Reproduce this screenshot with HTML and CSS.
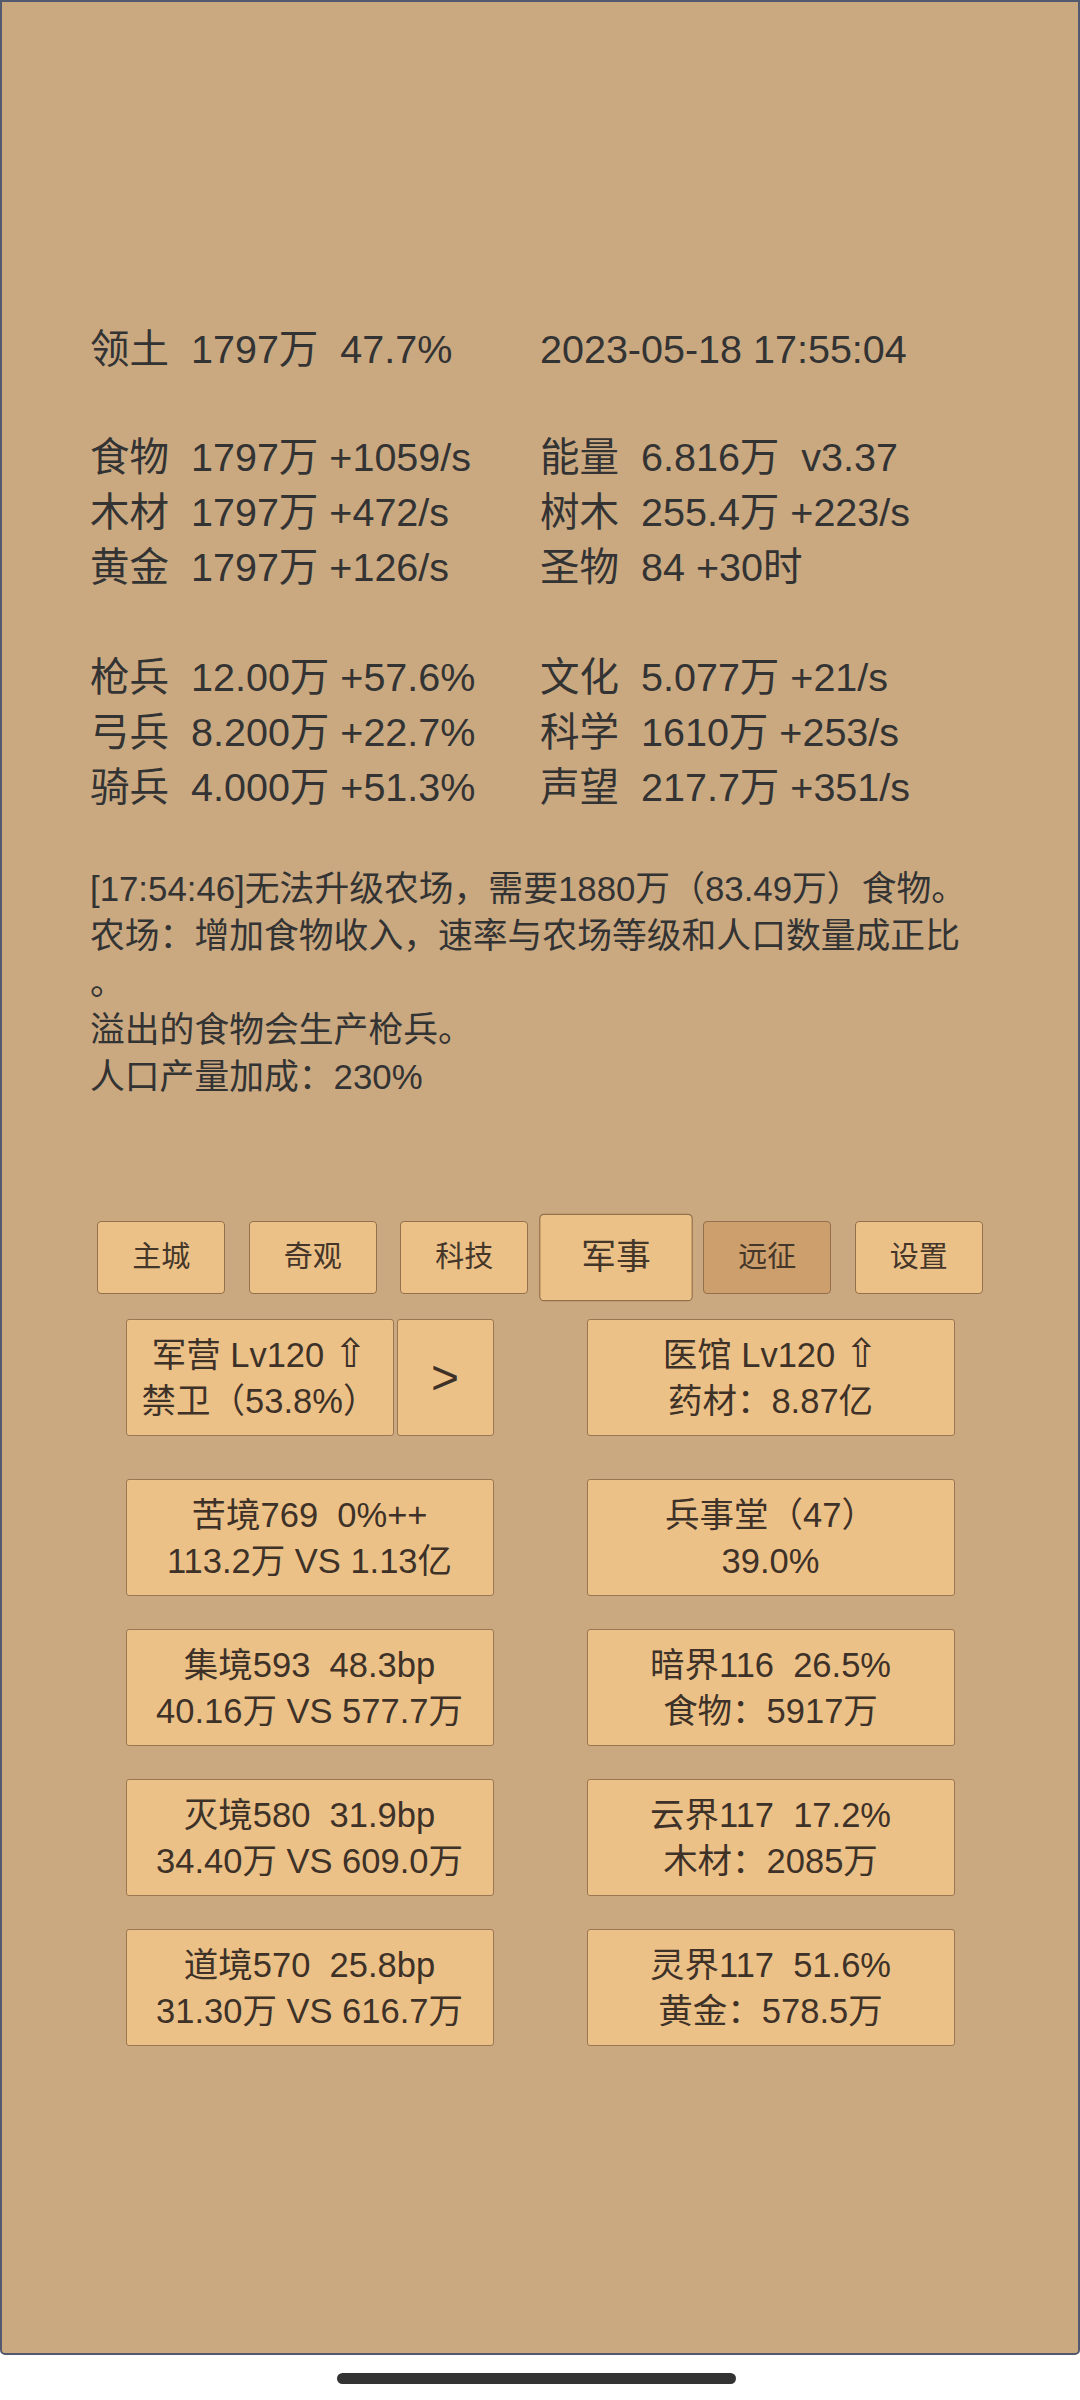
FILE: index.html
```html
<!DOCTYPE html>
<html lang="zh-CN">
<head>
<meta charset="utf-8">
<title>Game</title>
<link rel="stylesheet" href="styles.css">
</head>
<body>
<div class="screen">
  <div class="stats">
    <div class="cell"><span class="lbl">领土</span><span class="val">1797万  47.7%</span></div>
    <div class="cell"><span class="val">2023-05-18 17:55:04</span></div>
  </div>
  <div class="stats group">
    <div class="cell"><span class="lbl">食物</span><span class="val">1797万 +1059/s</span></div>
    <div class="cell"><span class="lbl">能量</span><span class="val">6.816万  v3.37</span></div>
    <div class="cell"><span class="lbl">木材</span><span class="val">1797万 +472/s</span></div>
    <div class="cell"><span class="lbl">树木</span><span class="val">255.4万 +223/s</span></div>
    <div class="cell"><span class="lbl">黄金</span><span class="val">1797万 +126/s</span></div>
    <div class="cell"><span class="lbl">圣物</span><span class="val">84 +30时</span></div>
  </div>
  <div class="stats group2">
    <div class="cell"><span class="lbl">枪兵</span><span class="val">12.00万 +57.6%</span></div>
    <div class="cell"><span class="lbl">文化</span><span class="val">5.077万 +21/s</span></div>
    <div class="cell"><span class="lbl">弓兵</span><span class="val">8.200万 +22.7%</span></div>
    <div class="cell"><span class="lbl">科学</span><span class="val">1610万 +253/s</span></div>
    <div class="cell"><span class="lbl">骑兵</span><span class="val">4.000万 +51.3%</span></div>
    <div class="cell"><span class="lbl">声望</span><span class="val">217.7万 +351/s</span></div>
  </div>

  <div class="log">
    <div class="log-line">[17:54:46]无法升级农场，需要1880万（83.49万）食物。</div>
    <div class="log-line">农场：增加食物收入，速率与农场等级和人口数量成正比</div>
    <div class="log-line">。</div>
    <div class="log-line">溢出的食物会生产枪兵。</div>
    <div class="log-line">人口产量加成：230%</div>
  </div>

  <div class="tabs">
    <div class="tab">主城</div>
    <div class="tab">奇观</div>
    <div class="tab">科技</div>
    <div class="tab active">军事</div>
    <div class="tab dim">远征</div>
    <div class="tab">设置</div>
  </div>

  <div class="cards">
    <div class="card-row first">
      <div class="split">
        <div class="card main"><div>军营 Lv120 <span class="arrow">⇧</span></div><div>禁卫（53.8%）</div></div>
        <div class="card next">&gt;</div>
      </div>
      <div class="card"><div>医馆 Lv120 <span class="arrow">⇧</span></div><div>药材：8.87亿</div></div>
    </div>
    <div class="card-row">
      <div class="card"><div>苦境769  0%++</div><div>113.2万 VS 1.13亿</div></div>
      <div class="card"><div>兵事堂（47）</div><div>39.0%</div></div>
    </div>
    <div class="card-row">
      <div class="card"><div>集境593  48.3bp</div><div>40.16万 VS 577.7万</div></div>
      <div class="card"><div>暗界116  26.5%</div><div>食物：5917万</div></div>
    </div>
    <div class="card-row">
      <div class="card"><div>灭境580  31.9bp</div><div>34.40万 VS 609.0万</div></div>
      <div class="card"><div>云界117  17.2%</div><div>木材：2085万</div></div>
    </div>
    <div class="card-row">
      <div class="card"><div>道境570  25.8bp</div><div>31.30万 VS 616.7万</div></div>
      <div class="card"><div>灵界117  51.6%</div><div>黄金：578.5万</div></div>
    </div>
  </div>
</div>
<div class="home-area">
  <div class="home-bar"></div>
</div>
</body>
</html>
```
FILE: styles.css
```css
html, body {
  margin: 0;
  padding: 0;
  background: #ffffff;
}

body {
  width: 1080px;
  height: 2400px;
  overflow: hidden;
  font-family: "Liberation Sans", "Noto Sans CJK SC", "DejaVu Sans", sans-serif;
}

.screen {
  box-sizing: border-box;
  width: 1080px;
  height: 2355px;
  background: #caa981;
  border: 2px solid #535a70;
  border-radius: 0 0 5px 5px;
  padding: 320px 88px 0 88px;
  color: #333333;
}

.stats {
  display: grid;
  grid-template-columns: 450px 450px;
  font-size: 39.5px;
  line-height: 55px;
}

.stats.group {
  margin-top: 53px;
}

.stats.group2 {
  margin-top: 55px;
}

.cell {
  white-space: pre;
  display: flex;
}

.lbl {
  width: 101px;
  flex: none;
}

.log {
  margin-top: 50px;
  font-size: 34.8px;
  line-height: 47px;
}

.log-line {
  white-space: pre;
  height: 47px;
}

.tabs {
  margin-top: 121px;
  display: flex;
  justify-content: center;
  gap: 23.5px;
}

.tab {
  box-sizing: border-box;
  width: 128px;
  height: 73px;
  background: #ecc187;
  border: 1.5px solid #94714c;
  border-radius: 4px;
  display: flex;
  align-items: center;
  justify-content: center;
  font-size: 29px;
  line-height: 1;
  color: #45362a;
}

.tab.active {
  transform: scale(1.2);
}

.tab.dim {
  background: #cd9f6c;
}

.cards {
  margin-top: 25px;
  display: flex;
  flex-direction: column;
  align-items: center;
  gap: 33px;
}

.card-row {
  display: grid;
  grid-template-columns: 368px 368px;
  column-gap: 93px;
}

.card-row.first {
  margin-bottom: 10px;
}

.split {
  display: flex;
  gap: 3px;
}

.card {
  box-sizing: border-box;
  height: 117px;
  background: #ecc187;
  border: 1.5px solid #9a7752;
  border-radius: 3px;
  display: flex;
  flex-direction: column;
  align-items: center;
  justify-content: center;
  font-size: 34.5px;
  line-height: 46px;
  color: #3d3128;
  white-space: pre;
}

.card.main {
  width: 268px;
}

.card.next {
  width: 97px;
  font-size: 48px;
}

.arrow {
  font-family: "DejaVu Sans", sans-serif;
  font-size: 40px;
  line-height: 1;
}

.home-area {
  height: 45px;
  display: flex;
  justify-content: center;
  padding-top: 18px;
  padding-right: 7px;
  box-sizing: border-box;
}

.home-bar {
  width: 399px;
  height: 11px;
  border-radius: 6px;
  background: #333333;
}
```
